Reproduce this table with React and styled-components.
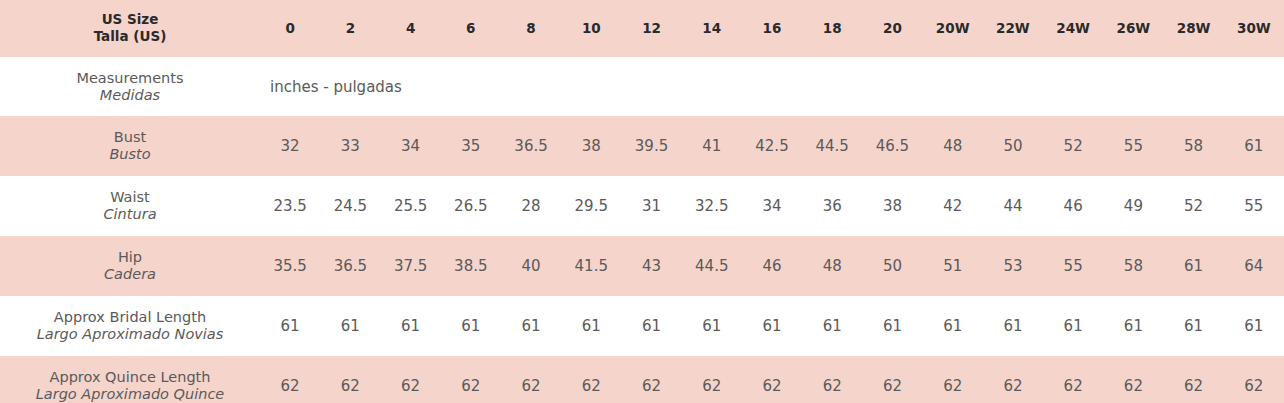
import React from "react";
import styled, { createGlobalStyle } from "styled-components";

const GlobalStyle = createGlobalStyle`
  html, body {
    margin: 0;
    padding: 0;
    background: #fff;
  }
  body {
    font-family: "DejaVu Sans", "Open Sans", sans-serif;
    overflow: hidden;
  }
`;

const Wrap = styled.div`
  width: 1284px;
  height: 403px;
  overflow: hidden;
`;

const Table = styled.table`
  width: 1284px;
  border-collapse: collapse;
  table-layout: fixed;
`;

const Row = styled.tr`
  background: ${(p) => (p.$pink ? "#f5d4cb" : "#fff")};
  height: ${(p) => p.$h || 60}px;
`;

const LabelCell = styled.td`
  width: 260px;
  text-align: center;
  vertical-align: middle;
  font-size: 14.5px;
  line-height: 17px;
  color: #5a5a5a;
  padding: 0;
  em {
    display: block;
    font-style: italic;
  }
`;

const HeadLabel = styled.th`
  width: 260px;
  text-align: center;
  vertical-align: middle;
  font-size: 13.5px;
  line-height: 17px;
  font-weight: 700;
  color: #2a2a2a;
  padding: 0 0 2px;
`;

const HeadCell = styled.th`
  text-align: center;
  vertical-align: middle;
  font-size: 13.5px;
  font-weight: 700;
  color: #2a2a2a;
  padding: 0 0 2px;
`;

const Cell = styled.td`
  text-align: center;
  vertical-align: middle;
  font-size: 15px;
  color: #5a5a5a;
  padding: 0;
`;

const UnitCell = styled.td`
  text-align: left;
  vertical-align: middle;
  font-size: 15px;
  color: #5a5a5a;
  padding: 0 0 0 10px;
`;

const sizes = ["0", "2", "4", "6", "8", "10", "12", "14", "16", "18", "20", "20W", "22W", "24W", "26W", "28W", "30W"];

const rows = [
  { en: "Bust", es: "Busto", pink: true, v: [32, 33, 34, 35, 36.5, 38, 39.5, 41, 42.5, 44.5, 46.5, 48, 50, 52, 55, 58, 61] },
  { en: "Waist", es: "Cintura", v: [23.5, 24.5, 25.5, 26.5, 28, 29.5, 31, 32.5, 34, 36, 38, 42, 44, 46, 49, 52, 55] },
  { en: "Hip", es: "Cadera", pink: true, v: [35.5, 36.5, 37.5, 38.5, 40, 41.5, 43, 44.5, 46, 48, 50, 51, 53, 55, 58, 61, 64] },
  { en: "Approx Bridal Length", es: "Largo Aproximado Novias", v: Array(17).fill(61) },
  { en: "Approx Quince Length", es: "Largo Aproximado Quince", pink: true, v: Array(17).fill(62) },
];

export default function App() {
  return (
    <Wrap>
      <GlobalStyle />
      <Table>
        <thead>
          <Row $pink $h={57}>
            <HeadLabel>
              US Size
              <br />
              Talla (US)
            </HeadLabel>
            {sizes.map((s) => (
              <HeadCell key={s}>{s}</HeadCell>
            ))}
          </Row>
        </thead>
        <tbody>
          <Row $h={59}>
            <LabelCell>
              Measurements
              <em>Medidas</em>
            </LabelCell>
            <UnitCell colSpan={17}>inches - pulgadas</UnitCell>
          </Row>
          {rows.map((r) => (
            <Row key={r.en} $pink={r.pink}>
              <LabelCell>
                {r.en}
                <em>{r.es}</em>
              </LabelCell>
              {r.v.map((n, i) => (
                <Cell key={i}>{n}</Cell>
              ))}
            </Row>
          ))}
        </tbody>
      </Table>
    </Wrap>
  );
}
